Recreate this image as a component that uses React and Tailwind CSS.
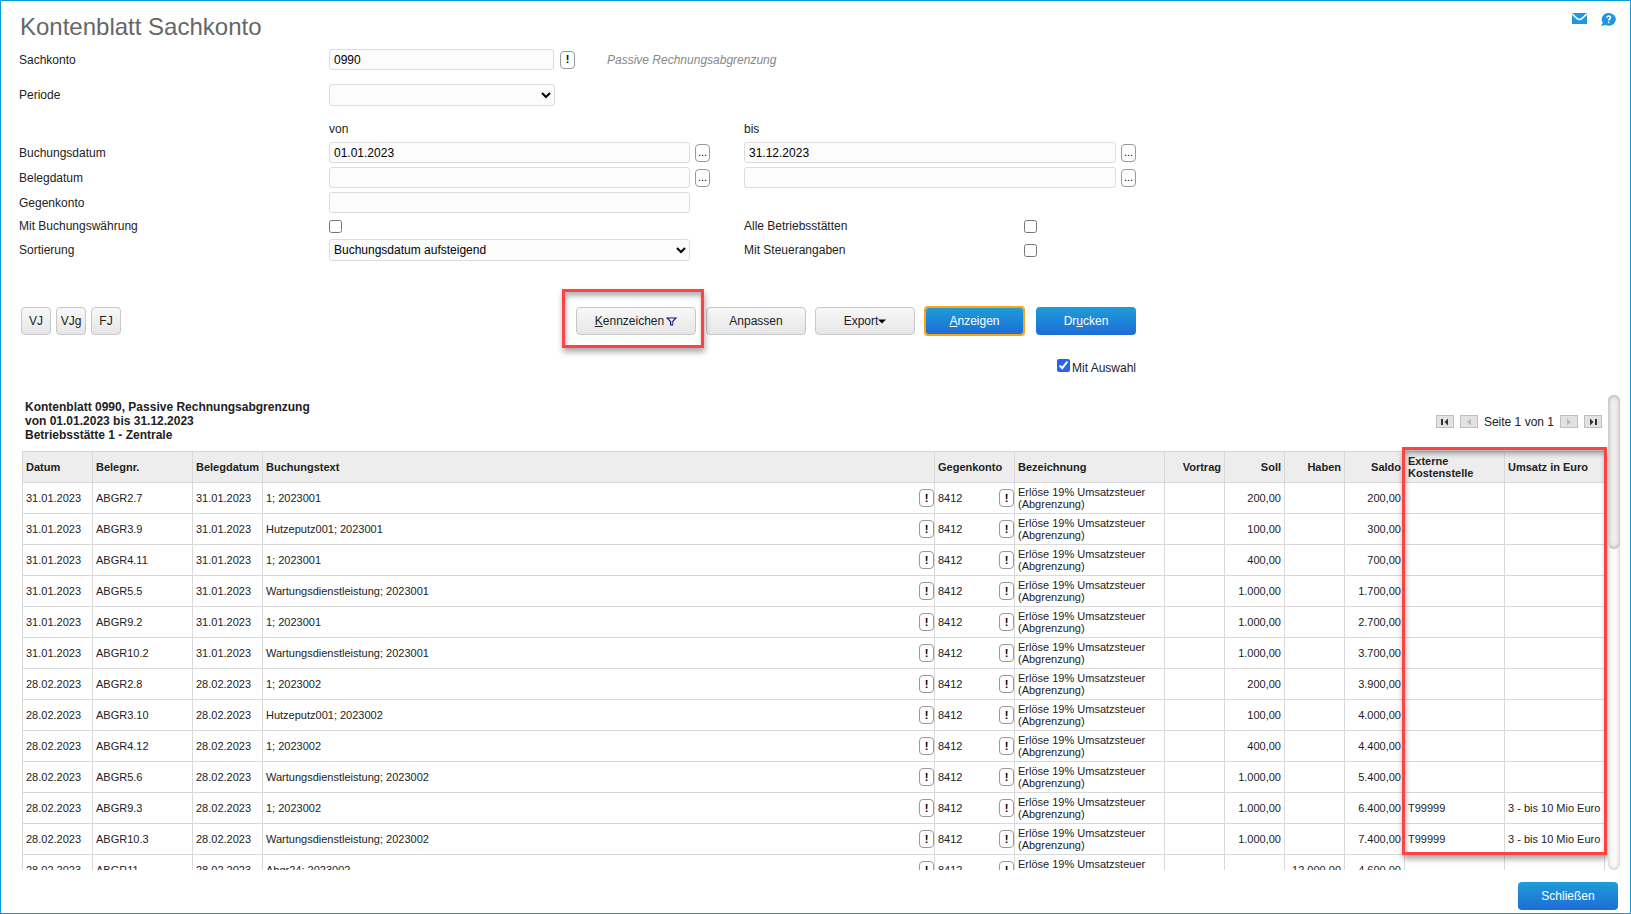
import { useState } from 'react';
import clsx from 'clsx';

const bookings = [
  { date: '31.01.2023', doc: 'ABGR2.7', text: '1; 2023001', soll: '200,00', saldo: '200,00' },
  { date: '31.01.2023', doc: 'ABGR3.9', text: 'Hutzeputz001; 2023001', soll: '100,00', saldo: '300,00' },
  { date: '31.01.2023', doc: 'ABGR4.11', text: '1; 2023001', soll: '400,00', saldo: '700,00' },
  { date: '31.01.2023', doc: 'ABGR5.5', text: 'Wartungsdienstleistung; 2023001', soll: '1.000,00', saldo: '1.700,00' },
  { date: '31.01.2023', doc: 'ABGR9.2', text: '1; 2023001', soll: '1.000,00', saldo: '2.700,00' },
  { date: '31.01.2023', doc: 'ABGR10.2', text: 'Wartungsdienstleistung; 2023001', soll: '1.000,00', saldo: '3.700,00' },
  { date: '28.02.2023', doc: 'ABGR2.8', text: '1; 2023002', soll: '200,00', saldo: '3.900,00' },
  { date: '28.02.2023', doc: 'ABGR3.10', text: 'Hutzeputz001; 2023002', soll: '100,00', saldo: '4.000,00' },
  { date: '28.02.2023', doc: 'ABGR4.12', text: '1; 2023002', soll: '400,00', saldo: '4.400,00' },
  { date: '28.02.2023', doc: 'ABGR5.6', text: 'Wartungsdienstleistung; 2023002', soll: '1.000,00', saldo: '5.400,00' },
  { date: '28.02.2023', doc: 'ABGR9.3', text: '1; 2023002', soll: '1.000,00', saldo: '6.400,00', kst: 'T99999', umsatz: '3 - bis 10 Mio Euro' },
  { date: '28.02.2023', doc: 'ABGR10.3', text: 'Wartungsdienstleistung; 2023002', soll: '1.000,00', saldo: '7.400,00', kst: 'T99999', umsatz: '3 - bis 10 Mio Euro' },
  { date: '28.02.2023', doc: 'ABGR11', text: 'Abgr24; 2023002', haben: '12.000,00', saldo: '4.600,00' },
];

const fieldClass = 'rounded-[3px] border border-[#dcdcdc] bg-[#fcfcfc] text-xs text-black outline-none';
const rowClass = 'grid grid-cols-[310px_415fr_392fr] items-center';
const markerClass =
  'pointer-events-none absolute border-3 border-[#ff4343] shadow-[1px_4px_6px_rgba(0,0,0,0.35),inset_1px_4px_5px_rgba(0,0,0,0.3)]';

function TextField({ className, ...props }) {
  return <input type="text" className={clsx(fieldClass, 'h-[21px] min-w-0 px-1', className)} {...props} />;
}

function InfoButton() {
  return (
    <button
      type="button"
      title="Info"
      className="flex h-[18px] w-[15px] shrink-0 items-center justify-center rounded-[4px] border border-[#999] bg-white text-[11px] font-bold text-black"
    >
      !
    </button>
  );
}

function DateField({ id, label, defaultValue }) {
  return (
    <div className="flex items-center gap-[5px]">
      <TextField id={id} aria-label={label} defaultValue={defaultValue} className="flex-1" />
      <button
        type="button"
        title="Kalender"
        className="flex h-[18px] w-[15px] shrink-0 items-center justify-center rounded-[4px] border border-[#999] bg-white text-[11px] text-black"
      >
        ...
      </button>
    </div>
  );
}

function Button({ primary, className, children }) {
  return (
    <button
      type="button"
      className={clsx(
        'flex shrink-0 items-center justify-center rounded-[4px] text-xs',
        primary
          ? 'bg-linear-to-b from-[#209cd8] to-[#1f6cd6] text-white'
          : 'border border-[#c8c8c8] bg-linear-to-b from-[#f8f8f8] to-[#e6e6e6] text-[#222]',
        className
      )}
    >
      {children}
    </button>
  );
}

function PagerButton({ label, disabled, children }) {
  return (
    <button
      type="button"
      aria-label={label}
      disabled={disabled}
      className={clsx(
        'flex h-[13px] w-[18px] items-center justify-center border border-[#c0c0c0] bg-[#e2e2e2]',
        disabled ? 'text-[#bbb]' : 'text-[#333]'
      )}
    >
      <svg width="10" height="8" viewBox="0 0 10 8" fill="currentColor">
        {children}
      </svg>
    </button>
  );
}

function FilterForm() {
  const [withSelection, setWithSelection] = useState(true);

  return (
    <form className="ml-[18px] max-w-[1117px]">
      <div className={clsx(rowClass, 'mb-[14px]')}>
        <label htmlFor="sachkonto">Sachkonto</label>
        <div className="flex items-center gap-[6px]">
          <TextField id="sachkonto" defaultValue="0990" className="w-[225px]" />
          <InfoButton />
          <span className="ml-[26px] whitespace-nowrap text-[#888] italic">Passive Rechnungsabgrenzung</span>
        </div>
      </div>
      <div className={rowClass}>
        <label htmlFor="periode">Periode</label>
        <select id="periode" className={clsx(fieldClass, 'h-[22px] w-[226px]')}>
          <option></option>
        </select>
      </div>
      <div className={clsx(rowClass, 'h-9 pt-[10px]')}>
        <span className="col-start-2">von</span>
        <span>bis</span>
      </div>
      <div className={clsx(rowClass, 'mb-1')}>
        <label htmlFor="buchungVon">Buchungsdatum</label>
        <div className="pr-[34px]">
          <DateField id="buchungVon" defaultValue="01.01.2023" />
        </div>
        <DateField id="buchungBis" label="Buchungsdatum bis" defaultValue="31.12.2023" />
      </div>
      <div className={clsx(rowClass, 'mb-1')}>
        <label htmlFor="belegVon">Belegdatum</label>
        <div className="pr-[34px]">
          <DateField id="belegVon" />
        </div>
        <DateField id="belegBis" label="Belegdatum bis" />
      </div>
      <div className={clsx(rowClass, 'mb-1')}>
        <label htmlFor="gegenkonto">Gegenkonto</label>
        <div className="flex pr-[54px]">
          <TextField id="gegenkonto" className="flex-1" />
        </div>
      </div>
      <div className={clsx(rowClass, 'mb-1 h-[18px]')}>
        <label htmlFor="waehrung">Mit Buchungswährung</label>
        <input id="waehrung" type="checkbox" className="size-[13px]" />
        <div className="flex items-center">
          <label htmlFor="betriebsstaetten" className="w-[280px]">Alle Betriebsstätten</label>
          <input id="betriebsstaetten" type="checkbox" className="size-[13px]" />
        </div>
      </div>
      <div className={rowClass}>
        <label htmlFor="sortierung">Sortierung</label>
        <div className="flex pr-[54px]">
          <select id="sortierung" className={clsx(fieldClass, 'h-[22px] flex-1')}>
            <option>Buchungsdatum aufsteigend</option>
          </select>
        </div>
        <div className="flex items-center">
          <label htmlFor="steuer" className="w-[280px]">Mit Steuerangaben</label>
          <input id="steuer" type="checkbox" className="size-[13px]" />
        </div>
      </div>

      <div className="mt-[45px] flex items-center justify-between">
        <div className="ml-[2px] flex gap-[5px]">
          <Button className="h-7 w-[30px]">VJ</Button>
          <Button className="h-7 w-[30px]">VJg</Button>
          <Button className="h-7 w-[30px]">FJ</Button>
        </div>
        <div className="flex items-center gap-[9px]">
          <div className="relative mr-px">
            <Button className="h-7 w-[120px]">
              <span><u>K</u>ennzeichen</span>
              <svg className="ml-[2px]" width="11" height="9" viewBox="0 0 11 9" fill="#fff">
                <path d="M1 1h9L6.6 4.6V8H4.6V4.6Z" stroke="#10108a" strokeWidth="1.2" />
                <path d="M6.1 4.5V7.6" stroke="#8a8ac8" strokeWidth="1" />
              </svg>
            </Button>
            <div className={clsx(markerClass, '-top-[18px] -right-[8px] -bottom-[13px] -left-[14px]')} />
          </div>
          <Button className="h-7 w-[100px]">Anpassen</Button>
          <Button className="h-7 w-[100px]">
            Export
            <svg width="8" height="5" viewBox="0 0 8 5" fill="#000">
              <path d="M0 0.5h8L4 4.5Z" />
            </svg>
          </Button>
          <Button primary className="h-[30px] w-[101px] border-2 border-[#fca311] bg-clip-padding">
            <span><u>A</u>nzeigen</span>
          </Button>
          <Button primary className="ml-[2px] h-7 w-[100px]">
            <span>Dr<u>u</u>cken</span>
          </Button>
        </div>
      </div>

      <div className="mt-[23px] flex h-4 items-start justify-end gap-[2px]">
        <input
          id="auswahl"
          type="checkbox"
          className="size-[13px] accent-[#2563f5]"
          checked={withSelection}
          onChange={(e) => setWithSelection(e.target.checked)}
        />
        <label htmlFor="auswahl" className="leading-[18px]">Mit Auswahl</label>
      </div>
    </form>
  );
}

function Pager() {
  return (
    <nav className="mt-[15px] mr-[3px] flex items-center gap-[6px] self-start leading-3">
      <PagerButton label="Erste Seite">
        <path d="M1 1h2v6H1zM8 0.5v7L4.5 4z" />
      </PagerButton>
      <PagerButton label="Vorherige Seite" disabled>
        <path d="M7 0.5v7L3 4z" />
      </PagerButton>
      <span>Seite 1 von 1</span>
      <PagerButton label="Nächste Seite" disabled>
        <path d="M3 0.5v7L7 4z" />
      </PagerButton>
      <PagerButton label="Letzte Seite">
        <path d="M2 0.5v7L5.5 4zM7 1h2v6H7z" />
      </PagerButton>
    </nav>
  );
}

function BookingTable() {
  const th = 'border border-[#d9d9d9] px-[3px] text-left font-bold';
  const td = 'border border-[#d9d9d9] px-[3px]';

  return (
    <table className="w-full table-fixed border-collapse text-[11px] leading-3">
      <colgroup>
        <col className="w-[70px]" />
        <col className="w-[100px]" />
        <col className="w-[70px]" />
        <col />
        <col className="w-[80px]" />
        <col className="w-[150px]" />
        <col className="w-[60px]" />
        <col className="w-[60px]" />
        <col className="w-[60px]" />
        <col className="w-[60px]" />
        <col className="w-[100px]" />
        <col className="w-[100px]" />
      </colgroup>
      <thead>
        <tr className="h-[31px] bg-[#ededed]">
          <th className={th}>Datum</th>
          <th className={th}>Belegnr.</th>
          <th className={th}>Belegdatum</th>
          <th className={th}>Buchungstext</th>
          <th className={th}>Gegenkonto</th>
          <th className={th}>Bezeichnung</th>
          <th className={clsx(th, 'text-right')}>Vortrag</th>
          <th className={clsx(th, 'text-right')}>Soll</th>
          <th className={clsx(th, 'text-right')}>Haben</th>
          <th className={clsx(th, 'text-right')}>Saldo</th>
          <th className={th}>Externe Kostenstelle</th>
          <th className={th}>Umsatz in Euro</th>
        </tr>
      </thead>
      <tbody>
        {bookings.map((b) => (
          <tr key={b.doc} className="h-[31px]">
            <td className={td}>{b.date}</td>
            <td className={td}>{b.doc}</td>
            <td className={td}>{b.date}</td>
            <td className="border border-[#d9d9d9] pl-[3px]">
              <div className="flex items-center justify-between">{b.text}<InfoButton /></div>
            </td>
            <td className="border border-[#d9d9d9] pl-[3px]">
              <div className="flex items-center justify-between">8412<InfoButton /></div>
            </td>
            <td className={td}>Erlöse 19% Umsatzsteuer (Abgrenzung)</td>
            <td className={td}></td>
            <td className={clsx(td, 'text-right')}>{b.soll}</td>
            <td className={clsx(td, 'text-right')}>{b.haben}</td>
            <td className={clsx(td, 'text-right')}>{b.saldo}</td>
            <td className={td}>{b.kst}</td>
            <td className={td}>{b.umsatz}</td>
          </tr>
        ))}
      </tbody>
    </table>
  );
}

export default function App() {
  return (
    <div className="flex h-screen min-h-[600px] flex-col border border-[#0a9ddc] bg-white font-['Liberation_Sans',Arial,sans-serif] text-xs text-[#222]">
      <header className="flex h-12 shrink-0 items-start justify-between pt-3 pr-[14px] pl-[19px]">
        <h1 className="text-2xl leading-7 text-[#666]">Kontenblatt Sachkonto</h1>
        <div className="flex items-start gap-[14px]">
          <button type="button" aria-label="Nachricht">
            <svg width="15" height="11" viewBox="0 0 15 11">
              <path d="M0 0h15v11H0z" fill="#2196e0" />
              <path d="M0 0.8C3 3.5 5.5 6.6 7.5 6.6S12 3.5 15 0.8" fill="none" stroke="#fff" strokeWidth="1.5" />
            </svg>
          </button>
          <button type="button" aria-label="Hilfe">
            <svg width="15" height="13" viewBox="0 0 15 13">
              <path d="M8 0a7 6.4 0 1 1-3.6 12L0 13l1.8-3.2A7 6.4 0 0 1 8 0z" fill="#2196e0" />
              <path d="M5.8 4.8C5.9 2.4 9.6 2.5 9.5 4.6 9.4 5.9 7.8 5.9 7.7 7.6M7.7 8.8v1.4" fill="none" stroke="#fff" strokeWidth="1.4" />
            </svg>
          </button>
        </div>
      </header>

      <FilterForm />

      <main className="mt-5 mr-[10px] ml-[21px] flex min-h-0 flex-1">
        <div className="min-w-0 flex-1 overflow-hidden pr-[3px]">
          <div className="mb-[9px] flex justify-between pt-[5px]">
            <h2 className="ml-[3px] leading-[14px] font-bold">
              Kontenblatt 0990, Passive Rechnungsabgrenzung
              <br />
              von 01.01.2023 bis 31.12.2023
              <br />
              Betriebsstätte 1 - Zentrale
            </h2>
            <Pager />
          </div>
          <div className="relative">
            <BookingTable />
            <div className={clsx(markerClass, '-top-1 -right-[2px] h-[408px] w-[205px]')} />
          </div>
        </div>
        <div className="w-3 rounded-full bg-[#fafafa] shadow-[inset_0_0_4px_rgba(0,0,0,0.25)]">
          <div className="h-[154px] rounded-full bg-[#eeeeee] shadow-[inset_0_0_4px_rgba(0,0,0,0.35)]" />
        </div>
      </main>

      <footer className="flex shrink-0 justify-end pt-3 pr-3 pb-[3px]">
        <Button primary className="h-7 w-[100px]">Schließen</Button>
      </footer>
    </div>
  );
}
